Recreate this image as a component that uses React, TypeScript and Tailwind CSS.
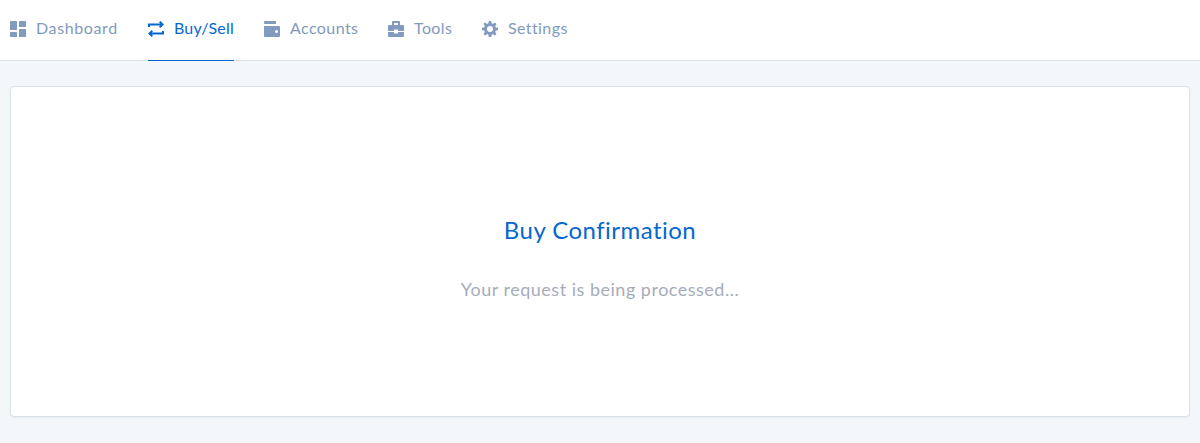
import type { ReactNode } from "react";

function Icon({ children }: { children: ReactNode }) {
  return (
    <svg viewBox="0 0 16 16" className="mt-[21px] block h-4 w-4 shrink-0" fill="currentColor">
      {children}
    </svg>
  );
}

const DashboardIcon = () => (
  <Icon>
    <rect x="0" y="0" width="7" height="9" rx=".6" />
    <rect x="0" y="11" width="7" height="5" rx=".6" />
    <rect x="9" y="0" width="7" height="6" rx=".6" />
    <rect x="9" y="8" width="7" height="8" rx=".6" />
  </Icon>
);

const TradeIcon = () => (
  <Icon>
    <path d="M0 6V2.500h12.200L11 1.300 12.300 0 16 3.500 12.300 7 11 5.700l1.200-1.200H2V6zM16 10v3.500H3.800L5 14.700 3.700 16 0 12.500 3.700 9 5 10.300l-1.200 1.200H14V10z" />
  </Icon>
);

const WalletIcon = () => (
  <Icon>
    <path d="M1 0h11v3H1a1 1 0 0 1-1-1V1a1 1 0 0 1 1-1z" />
    <path fillRule="evenodd" d="M0 5h15a1 1 0 0 1 1 1v9a1 1 0 0 1-1 1H1a1 1 0 0 1-1-1zM12.500 9a1.500 1.500 0 1 0 0 3 1.500 1.500 0 0 0 0-3z" />
  </Icon>
);

const ToolsIcon = () => (
  <Icon>
    <path fillRule="evenodd" d="M5 0h6a1 1 0 0 1 1 1v3h3a1 1 0 0 1 1 1v5h-6V8.500H6V10H0V5a1 1 0 0 1 1-1h3V1a1 1 0 0 1 1-1zM6 2v2h4V2z" />
    <path d="M0 11h6v1.500h4V11h6v4a1 1 0 0 1-1 1H1a1 1 0 0 1-1-1z" />
  </Icon>
);

const SettingsIcon = () => (
  <Icon>
    <path
      fillRule="evenodd"
      d="M6.800 0h2.400l.4 2.300 1.400.6 1.900-1.400 1.600 1.600-1.300 1.900.6 1.400 2.200.4v2.400l-2.200.4-.6 1.400 1.300 1.900-1.600 1.600-1.900-1.400-1.400.6L9.200 16H6.800l-.4-2.300-1.400-.6-1.900 1.400-1.600-1.600 1.300-1.900-.6-1.400L0 9.200V6.800l2.200-.4.600-1.400-1.300-1.900 1.600-1.600L5 2.900l1.400-.6zM8 5a3 3 0 1 0 0 6 3 3 0 0 0 0-6z"
    />
  </Icon>
);

interface TabProps {
  label: string;
  icon: ReactNode;
  className: string;
  textClass: string;
  active?: boolean;
}

function Tab({ label, icon, className, textClass, active = false }: TabProps) {
  return (
    <a
      className={`flex h-[61px] gap-[10px] border-b ${active ? "border-[#0667d0] text-[#0667d0]" : "border-transparent text-[#819abe]"} ${className}`}
    >
      {icon}
      <span className={`mt-4 text-[16px] leading-6 whitespace-nowrap ${textClass}`}>{label}</span>
    </a>
  );
}

export default function App() {
  return (
    <div className="flex h-[443px] flex-col bg-[#f3f7fa] font-['Lato',sans-serif]">
      <nav className="flex h-[61px] shrink-0 gap-[30px] border-b border-[#dae1e9] bg-white px-[10px]">
        <Tab label="Dashboard" icon={<DashboardIcon />} className="w-[108px]" textClass="tracking-[0.62px]" />
        <Tab label="Buy/Sell" icon={<TradeIcon />} className="w-[86px]" textClass="tracking-[0.15px]" active />
        <Tab label="Accounts" icon={<WalletIcon />} className="w-[94px]" textClass="tracking-[0.42px]" />
        <Tab label="Tools" icon={<ToolsIcon />} className="w-[64px]" textClass="tracking-[0.4px]" />
        <Tab label="Settings" icon={<SettingsIcon />} className="w-[86px]" textClass="tracking-[0.4px]" />
      </nav>
      <main className="mx-[10px] mt-[25px] flex h-[331px] flex-col items-center rounded border border-[#dae1e9] bg-white text-center shadow-[0_1px_2px_rgba(180,200,220,0.2)]">
        <h1 className="mt-[127px] text-[24px] leading-8 tracking-[0.46px] text-[#0667d0]">Buy Confirmation</h1>
        <p className="mt-[30px] text-[18px] leading-[26px] tracking-[0.5px] text-[#a5adba]">
          Your request is being processed...
        </p>
      </main>
    </div>
  );
}
